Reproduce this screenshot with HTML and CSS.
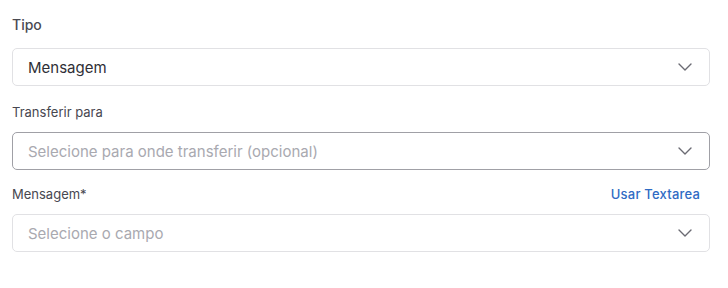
FILE: index.html
```html
<!DOCTYPE html>
<html lang="pt-BR">
<head>
    <meta charset="UTF-8">
    <meta name="viewport" content="width=device-width, initial-scale=1.0">
    <title>Transferir</title>
    <link rel="stylesheet" href="styles.css">
</head>
<body>
    <div class="form">
        <div class="field field-first">
            <div class="label-row">
                <label class="label label-strong">Tipo</label>
            </div>
            <div class="select">
                <span class="value">Mensagem</span>
                <svg class="chevron" width="14" height="8" viewBox="0 0 14 8"><path d="M1 1l6 6 6-6" fill="none" stroke="#6b6b73" stroke-width="1.4" stroke-linecap="round" stroke-linejoin="round"/></svg>
            </div>
        </div>

        <div class="field">
            <div class="label-row">
                <label class="label">Transferir para</label>
            </div>
            <div class="select select-focus">
                <span class="placeholder">Selecione para onde transferir (opcional)</span>
                <svg class="chevron" width="14" height="8" viewBox="0 0 14 8"><path d="M1 1l6 6 6-6" fill="none" stroke="#6b6b73" stroke-width="1.4" stroke-linecap="round" stroke-linejoin="round"/></svg>
            </div>
        </div>

        <div class="field field-last">
            <div class="label-row">
                <label class="label">Mensagem*</label>
                <a class="link" href="#">Usar Textarea</a>
            </div>
            <div class="select">
                <span class="placeholder">Selecione o campo</span>
                <svg class="chevron" width="14" height="8" viewBox="0 0 14 8"><path d="M1 1l6 6 6-6" fill="none" stroke="#6b6b73" stroke-width="1.4" stroke-linecap="round" stroke-linejoin="round"/></svg>
            </div>
        </div>
    </div>
</body>
</html>
```

FILE: styles.css
```css
body {
    margin: 0;
    font-family: "Inter", "Roboto", sans-serif;
    background-color: #ffffff;
    color: #333;
}

.form {
    width: 698px;
    padding: 0 0 0 12px;
}

.field {
    margin-top: 16px;
}

.field-first {
    margin-top: 14px;
}

.field-last {
    margin-top: 14px;
}

.label-row {
    display: flex;
    justify-content: space-between;
    align-items: center;
    height: 20px;
    padding-right: 10px;
    margin-bottom: 10px;
}

.field-first .label-row {
    margin-bottom: 14px;
}

.label {
    font-size: 13px;
    color: #474750;
}

.label-strong {
    font-size: 14px;
    font-weight: 500;
    color: #4a4a52;
}

.link {
    font-size: 13px;
    font-weight: 500;
    color: #2f6bc4;
    text-decoration: none;
    letter-spacing: 0.2px;
}

.select {
    box-sizing: border-box;
    height: 38px;
    border: 1px solid #e1e1e4;
    border-radius: 5px;
    display: flex;
    align-items: center;
    justify-content: space-between;
    padding: 0 17px 0 15px;
    font-size: 15px;
}

.select-focus {
    border-color: #a0a0a6;
}

.value {
    color: #2f2f36;
}

.placeholder {
    color: #a9a9b0;
}
```
